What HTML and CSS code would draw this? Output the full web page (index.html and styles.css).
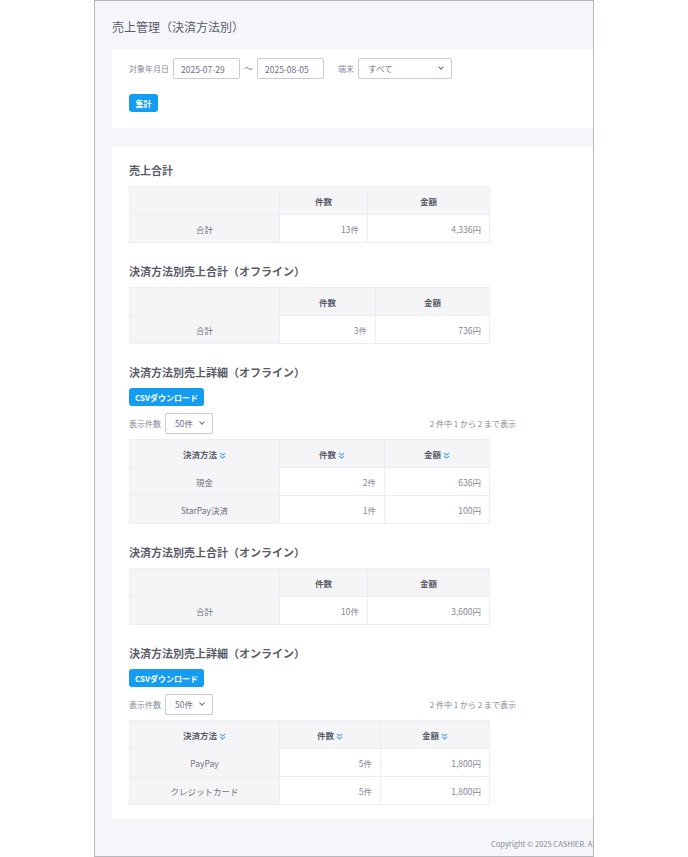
FILE: index.html
```html
<!DOCTYPE html>
<html lang="ja">
<head>
    <meta charset="UTF-8">
    <title>売上管理（決済方法別）</title>
    <link rel="stylesheet" href="styles.css">
</head>
<body>

<div class="frame">
  <div class="page">
    <h1 class="page-title">売上管理（決済方法別）</h1>

    <div class="card search-card">
        <div class="search-row">
            <span class="label">対象年月日</span>
            <input type="text" class="date-input" value="2025-07-29">
            <span class="tilde">～</span>
            <input type="text" class="date-input" value="2025-08-05">
            <span class="label label-terminal">端末</span>
            <div class="select select-terminal">すべて<span class="caret"></span></div>
        </div>
        <button class="btn btn-small">集計</button>
    </div>

    <div class="card result-card">

        <div class="section">
            <h3>売上合計</h3>
            <table class="tbl">
                <colgroup><col class="c1"><col style="width:88px"><col style="width:122px"></colgroup>
                <tr><th></th><th>件数</th><th>金額</th></tr>
                <tr><td class="name">合計</td><td class="num">13件</td><td class="num">4,336円</td></tr>
            </table>
        </div>

        <div class="section">
            <h3>決済方法別売上合計（オフライン）</h3>
            <table class="tbl">
                <colgroup><col class="c1"><col style="width:96px"><col style="width:114px"></colgroup>
                <tr><th></th><th>件数</th><th>金額</th></tr>
                <tr><td class="name">合計</td><td class="num">3件</td><td class="num">736円</td></tr>
            </table>
        </div>

        <div class="section">
            <h3>決済方法別売上詳細（オフライン）</h3>
            <button class="btn btn-csv">CSVダウンロード</button>
            <div class="list-controls">
                <span class="label">表示件数</span>
                <div class="select select-count">50件<span class="caret"></span></div>
                <span class="info">2 件中 1 から 2 まで表示</span>
            </div>
            <table class="tbl">
                <colgroup><col class="c1"><col style="width:105px"><col style="width:105px"></colgroup>
                <tr>
                    <th>決済方法 <svg class="sort" viewBox="0 0 8 8"><path d="M1 1l3 2.5L7 1M1 4.5L4 7l3-2.5"/></svg></th>
                    <th>件数 <svg class="sort" viewBox="0 0 8 8"><path d="M1 1l3 2.5L7 1M1 4.5L4 7l3-2.5"/></svg></th>
                    <th>金額 <svg class="sort" viewBox="0 0 8 8"><path d="M1 1l3 2.5L7 1M1 4.5L4 7l3-2.5"/></svg></th>
                </tr>
                <tr><td class="name">現金</td><td class="num">2件</td><td class="num">636円</td></tr>
                <tr><td class="name">StarPay決済</td><td class="num">1件</td><td class="num">100円</td></tr>
            </table>
        </div>

        <div class="section">
            <h3>決済方法別売上合計（オンライン）</h3>
            <table class="tbl">
                <colgroup><col class="c1"><col style="width:88px"><col style="width:122px"></colgroup>
                <tr><th></th><th>件数</th><th>金額</th></tr>
                <tr><td class="name">合計</td><td class="num">10件</td><td class="num">3,600円</td></tr>
            </table>
        </div>

        <div class="section last">
            <h3>決済方法別売上詳細（オンライン）</h3>
            <button class="btn btn-csv">CSVダウンロード</button>
            <div class="list-controls">
                <span class="label">表示件数</span>
                <div class="select select-count">50件<span class="caret"></span></div>
                <span class="info">2 件中 1 から 2 まで表示</span>
            </div>
            <table class="tbl">
                <colgroup><col class="c1"><col style="width:101px"><col style="width:109px"></colgroup>
                <tr>
                    <th>決済方法 <svg class="sort" viewBox="0 0 8 8"><path d="M1 1l3 2.5L7 1M1 4.5L4 7l3-2.5"/></svg></th>
                    <th>件数 <svg class="sort" viewBox="0 0 8 8"><path d="M1 1l3 2.5L7 1M1 4.5L4 7l3-2.5"/></svg></th>
                    <th>金額 <svg class="sort" viewBox="0 0 8 8"><path d="M1 1l3 2.5L7 1M1 4.5L4 7l3-2.5"/></svg></th>
                </tr>
                <tr><td class="name">PayPay</td><td class="num">5件</td><td class="num">1,800円</td></tr>
                <tr><td class="name">クレジットカード</td><td class="num">5件</td><td class="num">1,800円</td></tr>
            </table>
        </div>
    </div>

    <footer class="footer">Copyright © 2025 CASHIER. All rights reserved.</footer>
  </div>
</div>

</body>
</html>
```

FILE: styles.css
```css
body {
    margin: 0;
    background: #ffffff;
    font-family: "Noto Sans CJK JP", "Noto Sans", sans-serif;
    color: #858796;
}
.frame {
    margin-left: 94px;
    width: 498px;
    height: 855px;
    border: 1px solid #b8b8bc;
    background: #f5f6fa;
    overflow: hidden;
}
.page {
    width: 620px;
    padding-left: 17px;
}
.page-title {
    margin: 0;
    padding-top: 17px;
    height: 31px;
    font-size: 12px;
    line-height: 18px;
    font-weight: normal;
    color: #5a5c69;
}
.card {
    background: #fff;
}
.search-card {
    height: 79px;
    padding: 9px 17px 0;
    box-sizing: border-box;
}
.search-row {
    display: flex;
    align-items: center;
    height: 21px;
}
.label {
    font-size: 8px;
    color: #858796;
}
.date-input {
    width: 67px;
    height: 21px;
    box-sizing: border-box;
    margin-left: 4px;
    padding: 0 7px;
    border: 1px solid #c9cbd4;
    border-radius: 2px;
    font-family: inherit;
    font-size: 8.5px;
    color: #6e707e;
}
.tilde + .date-input {
    margin-left: 0;
}
.tilde {
    width: 17px;
    text-align: center;
    font-size: 9px;
    color: #858796;
}
.label-terminal {
    margin-left: 14px;
    margin-right: 4px;
}
.select {
    position: relative;
    height: 21px;
    box-sizing: border-box;
    border: 1px solid #c9cbd4;
    border-radius: 2px;
    background: #fff;
    font-size: 8.5px;
    line-height: 19px;
    padding-left: 9px;
    color: #6e707e;
}
.select-terminal {
    width: 94px;
}
.caret {
    position: absolute;
    right: 8px;
    top: 6px;
    width: 3px;
    height: 3px;
    border-right: 1px solid #6e707e;
    border-bottom: 1px solid #6e707e;
    transform: rotate(45deg);
}
.btn {
    display: block;
    border: none;
    border-radius: 3px;
    background: #139cf0;
    color: #fff;
    font-family: inherit;
    font-weight: bold;
    font-size: 8px;
    padding: 0;
}
.btn-small {
    margin-top: 15px;
    width: 29px;
    height: 18px;
}
.result-card {
    margin-top: 19px;
    padding: 16px 17px 14px;
    box-sizing: border-box;
    height: 672px;
}
.section {
    margin-bottom: 21px;
}
.section.last {
    margin-bottom: 0;
}
.section h3 {
    margin: 0 0 9px;
    font-size: 11px;
    line-height: 14px;
    color: #5a5c69;
}
.btn-csv {
    width: 75px;
    height: 18px;
    margin-top: 0;
}
.list-controls {
    display: flex;
    align-items: center;
    width: 387px;
    margin-top: 7px;
    margin-bottom: 5px;
}
.list-controls .label {
    margin-right: 4px;
}
.select-count {
    width: 48px;
}
.info {
    margin-left: auto;
    font-size: 8px;
    color: #858796;
}
.tbl {
    border-collapse: collapse;
    table-layout: fixed;
    width: 360px;
}
.tbl col.c1 {
    width: 150px;
}
.tbl th, .tbl td {
    height: 28px;
    padding: 0 8px;
    box-sizing: border-box;
    border: 1px solid #eceef3;
    font-size: 8.5px;
}
.tbl th {
    background: #f5f5f7;
    color: #5a5c69;
    font-weight: bold;
    text-align: center;
}
.tbl td.name {
    background: #f5f5f7;
    text-align: center;
    color: #6e707e;
}
.tbl td.num {
    text-align: right;
    color: #858796;
}
.sort {
    width: 7px;
    height: 7px;
    vertical-align: -1px;
    fill: none;
    stroke: #4a9ff0;
    stroke-width: 1.2;
}
.footer {
    margin-top: 19px;
    padding-left: 379px;
    font-size: 7.5px;
    color: #858796;
    white-space: nowrap;
}
```
